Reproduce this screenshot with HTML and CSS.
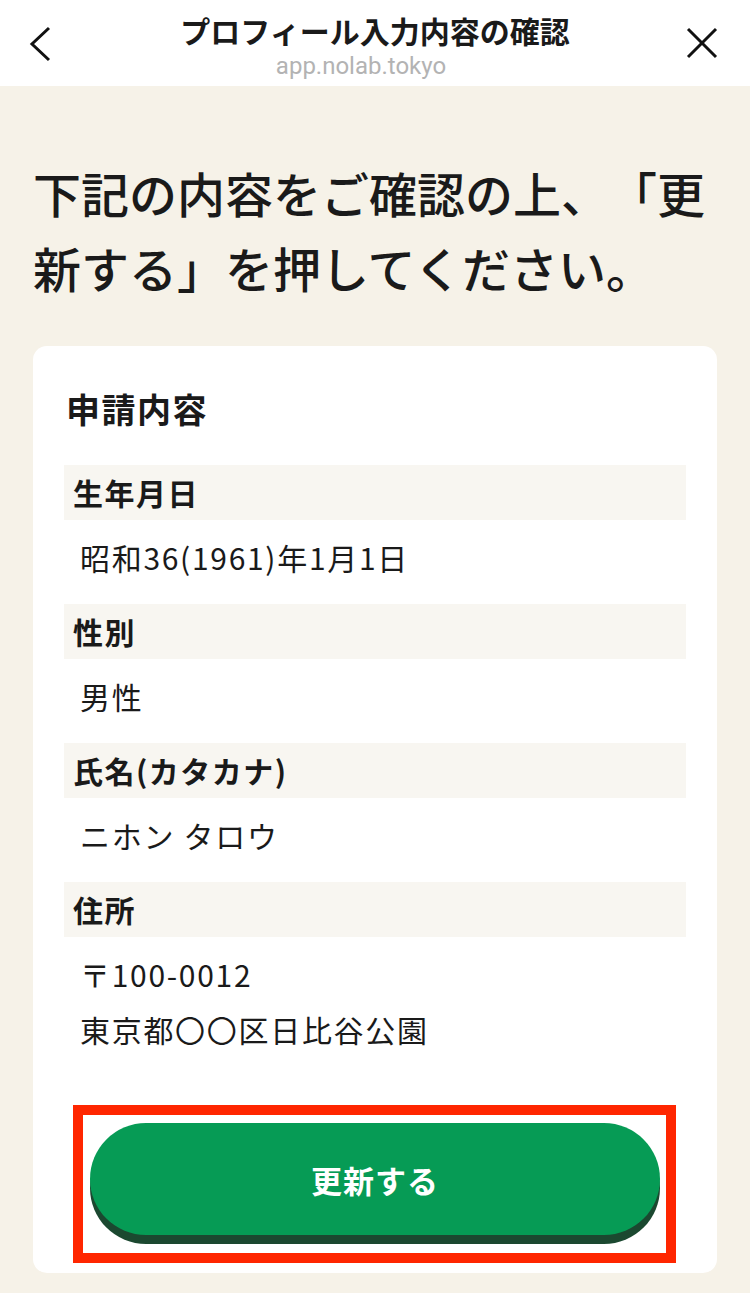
FILE: index.html
```html
<!DOCTYPE html>
<html lang="ja">
<head>
  <meta charset="UTF-8" />
  <meta name="viewport" content="width=device-width, initial-scale=1.0" />
  <title>プロフィール入力内容の確認</title>
  <link rel="stylesheet" href="styles.css">
</head>
<body>

  <header class="top-bar">
    <button class="icon-btn back-btn" aria-label="戻る">
      <svg viewBox="0 0 24 36" width="24" height="36">
        <polyline points="21,2 4,18 21,34" fill="none" stroke="#111" stroke-width="3" />
      </svg>
    </button>
    <div class="top-title">
      <div class="page-title">プロフィール入力内容の確認</div>
      <div class="page-url">app.nolab.tokyo</div>
    </div>
    <button class="icon-btn close-btn" aria-label="閉じる">
      <svg viewBox="0 0 32 32" width="32" height="32">
        <line x1="2" y1="2" x2="30" y2="30" stroke="#111" stroke-width="3" />
        <line x1="30" y1="2" x2="2" y2="30" stroke="#111" stroke-width="3" />
      </svg>
    </button>
  </header>

  <main class="content">
    <h1 class="lead">下記の内容をご確認の上、「更新する」を押してください。</h1>

    <section class="card">
      <h2 class="card-title">申請内容</h2>

      <dl class="info-list">
        <dt>生年月日</dt>
        <dd>昭和36(1961)年1月1日</dd>

        <dt>性別</dt>
        <dd>男性</dd>

        <dt>氏名(カタカナ)</dt>
        <dd>ニホン タロウ</dd>

        <dt>住所</dt>
        <dd>〒100-0012<br>東京都〇〇区日比谷公園</dd>
      </dl>

      <div class="highlight">
        <button class="submit-btn">更新する</button>
      </div>
    </section>
  </main>

</body>
</html>
```

FILE: styles.css
```css
body {
  margin: 0;
  background: #f6f2e8;
  color: #1a1a1a;
  font-family: "Noto Sans CJK JP", "Noto Sans", sans-serif;
}

.top-bar {
  display: grid;
  grid-template-columns: 80px 1fr 80px;
  height: 86px;
  background: #fff;
}

.icon-btn {
  background: none;
  border: none;
  padding: 0;
  cursor: pointer;
  align-self: start;
}

.back-btn {
  margin: 26px 0 0 28px;
  justify-self: start;
}

.close-btn {
  margin: 27px 32px 0 0;
  justify-self: end;
}

.top-title {
  text-align: center;
  padding-top: 10px;
}

.page-title {
  font-size: 30px;
  font-weight: bold;
  line-height: 40px;
}

.page-url {
  margin-top: 4px;
  padding-right: 28px;
  font-family: Roboto, "Liberation Sans", sans-serif;
  font-size: 24px;
  line-height: 24px;
  color: #b3b3b3;
}

.content {
  padding: 69px 33px 20px;
}

.lead {
  margin: 0 0 41px;
  font-size: 48px;
  font-weight: 500;
  line-height: 75px;
  text-spacing-trim: space-all;
}

.card {
  background: #fff;
  border-radius: 14px;
  padding: 37px 31px 10px;
}

.card-title {
  margin: 0 0 31px 2px;
  font-size: 34px;
  font-weight: bold;
  line-height: 51px;
  letter-spacing: 1.5px;
}

.info-list {
  margin: 0;
}

.info-list dt {
  background: #f8f6f1;
  height: 55px;
  line-height: 55px;
  padding-left: 9px;
  font-size: 30px;
  font-weight: bold;
  letter-spacing: 1.5px;
}

.info-list dd {
  margin: 0;
  padding: 10px 16px 19px;
  font-size: 30px;
  line-height: 55px;
  letter-spacing: 1.7px;
}

.highlight {
  margin: 29px 10px 0 9px;
  border: 10px solid #ff2600;
  padding: 8px 6px 18px 7px;
}

.submit-btn {
  display: block;
  width: 100%;
  height: 112px;
  border: none;
  border-radius: 56px;
  background: #069b55;
  box-shadow: 0 9px 0 #1b4830;
  color: #fff;
  font-family: inherit;
  font-size: 31px;
  font-weight: bold;
  letter-spacing: 1px;
  cursor: pointer;
}
```
